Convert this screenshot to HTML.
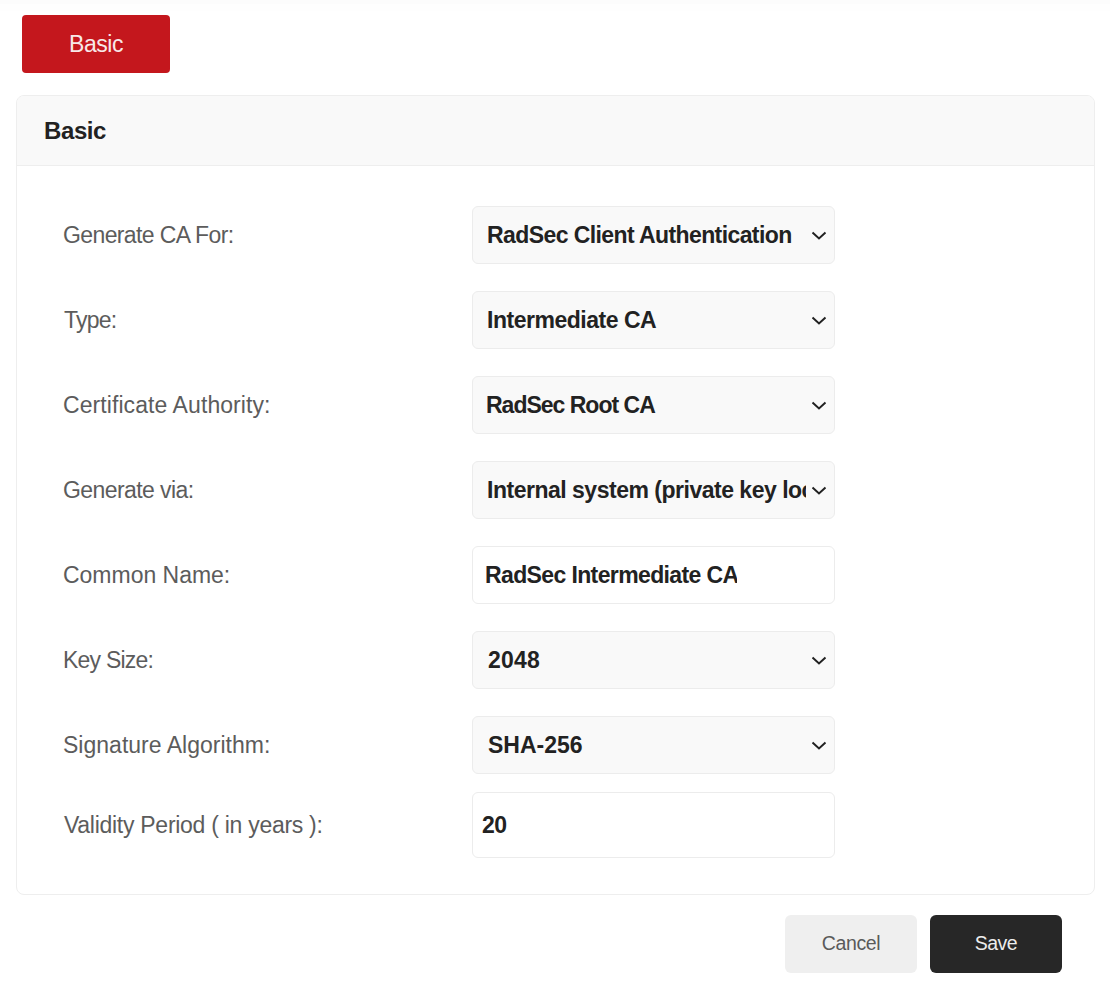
<!DOCTYPE html>
<html><head><meta charset="utf-8">
<style>
*{box-sizing:border-box;margin:0;padding:0}
html,body{width:1110px;height:994px;background:#fff;overflow:hidden;font-family:"Liberation Sans",sans-serif;position:relative}
.topshade{position:absolute;left:0;top:0;width:1110px;height:4px;background:#fcfcfc}
.topshade2{position:absolute;left:0;top:4px;width:1110px;height:7px;background:#fefefe}
.tab{position:absolute;left:22px;top:15px;width:148px;height:58px;background:#c4171d;border-radius:4px}
.tab span{position:absolute;left:0;width:148px;top:16px;text-align:center;color:#f8e8e8;font-size:23px;line-height:26px;letter-spacing:-0.45px}
.card{position:absolute;left:16px;top:95px;width:1079px;height:800px;border:1px solid #eeeeee;border-radius:8px;background:#fff;overflow:hidden}
.hdr{position:absolute;left:0;top:0;width:100%;height:70px;background:#f9f9f9;border-bottom:1px solid #eeeeee}
.t{position:absolute;white-space:nowrap;line-height:26px;font-size:23px}
.hdr .t{left:27px;top:21.5px;font-size:24px;font-weight:700;color:#222;letter-spacing:-0.4px}
.lbl{left:63px;color:#5c5c5c}
.ctl{position:absolute;left:472px;width:363px;height:58px;border:1px solid #ececec;border-radius:6px;background:#f9f9f9;overflow:hidden}
.ctl.inp{background:#fff}
.ctl .t{left:14px;top:15px;font-weight:700;color:#222}
.clip{position:absolute;left:0;top:0;width:333px;height:56px;overflow:hidden}
.chev{position:absolute;left:338.3px;top:23.6px;width:16px;height:9px}
.btn{position:absolute;top:915px;width:132px;height:58px;border-radius:6px}
.btn .t{left:0;width:132px;text-align:center;top:15px;font-size:19.5px;line-height:26px}
.cancel{left:785px;background:#efefef}
.cancel .t{color:#5a5a5a;letter-spacing:-0.4px}
.save{left:930px;background:#272727}
.save .t{color:#ececec;letter-spacing:-0.5px}
</style></head><body>
<div class="topshade"></div><div class="topshade2"></div>
<div class="tab"><span>Basic</span></div>
<div class="card">
  <div class="hdr"><span class="t">Basic</span></div>
</div>
<div class="t lbl" style="top:222px;letter-spacing:-0.61px">Generate CA For:</div>
<div class="t lbl" style="top:307px;left:64px;letter-spacing:-0.79px">Type:</div>
<div class="t lbl" style="top:392px;letter-spacing:0.08px">Certificate Authority:</div>
<div class="t lbl" style="top:477px;letter-spacing:-0.58px">Generate via:</div>
<div class="t lbl" style="top:562px;letter-spacing:-0.02px">Common Name:</div>
<div class="t lbl" style="top:647px;letter-spacing:-0.78px">Key Size:</div>
<div class="t lbl" style="top:732px;letter-spacing:0.01px">Signature Algorithm:</div>
<div class="t lbl" style="top:812px;left:64px;letter-spacing:-0.28px">Validity Period ( in years ):</div>

<div class="ctl" style="top:206px"><div class="clip"><span class="t" style="letter-spacing:-0.59px">RadSec Client Authentication</span></div><svg class="chev" viewBox="0 0 16 9"><path d="M1.5 1.5 L8 7.5 L14.5 1.5" fill="none" stroke="#222" stroke-width="2"/></svg></div>
<div class="ctl" style="top:291px"><div class="clip"><span class="t" style="letter-spacing:-0.48px">Intermediate CA</span></div><svg class="chev" viewBox="0 0 16 9"><path d="M1.5 1.5 L8 7.5 L14.5 1.5" fill="none" stroke="#222" stroke-width="2"/></svg></div>
<div class="ctl" style="top:376px"><div class="clip"><span class="t" style="left:13px;letter-spacing:-1px">RadSec Root CA</span></div><svg class="chev" viewBox="0 0 16 9"><path d="M1.5 1.5 L8 7.5 L14.5 1.5" fill="none" stroke="#222" stroke-width="2"/></svg></div>
<div class="ctl" style="top:461px"><div class="clip"><span class="t" style="letter-spacing:-0.49px">Internal system (private key location)</span></div><svg class="chev" viewBox="0 0 16 9"><path d="M1.5 1.5 L8 7.5 L14.5 1.5" fill="none" stroke="#222" stroke-width="2"/></svg></div>
<div class="ctl inp" style="top:546px"><div class="clip" style="width:263px;left:1px"><span class="t" style="left:11px;letter-spacing:-0.62px">RadSec Intermediate CA</span></div></div>
<div class="ctl" style="top:631px"><div class="clip"><span class="t" style="left:15px;letter-spacing:0.25px">2048</span></div><svg class="chev" viewBox="0 0 16 9"><path d="M1.5 1.5 L8 7.5 L14.5 1.5" fill="none" stroke="#222" stroke-width="2"/></svg></div>
<div class="ctl" style="top:716px"><div class="clip"><span class="t" style="left:15px;letter-spacing:0px">SHA-256</span></div><svg class="chev" viewBox="0 0 16 9"><path d="M1.5 1.5 L8 7.5 L14.5 1.5" fill="none" stroke="#222" stroke-width="2"/></svg></div>
<div class="ctl inp" style="top:792px;height:66px"><span class="t" style="left:9px;top:19px;letter-spacing:-0.5px">20</span></div>

<div class="btn cancel"><span class="t">Cancel</span></div>
<div class="btn save"><span class="t">Save</span></div>
</body></html>
